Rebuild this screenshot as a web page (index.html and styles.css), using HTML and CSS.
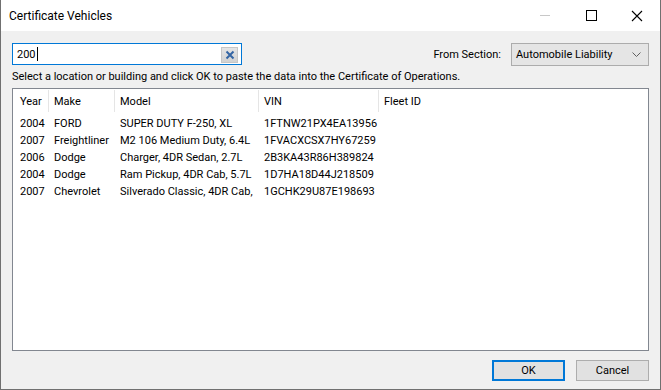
FILE: index.html
```html
<!DOCTYPE html>
<html lang="en">
<head>
    <meta charset="UTF-8">
    <title>Certificate Vehicles</title>
    <link rel="stylesheet" href="styles.css">
</head>
<body>
    <div class="window">
        <!-- Title bar -->
        <div class="titlebar">
            <span class="titlebar__text">Certificate Vehicles</span>
            <div class="titlebar__buttons">
                <span class="tb-btn tb-btn--min"><span class="tb-min"></span></span>
                <span class="tb-btn"><span class="tb-max"></span></span>
                <span class="tb-btn">
                    <svg width="12" height="12" viewBox="0 0 12 12"><path d="M1 1L11 11M11 1L1 11" stroke="#000" stroke-width="1.1" fill="none"/></svg>
                </span>
            </div>
        </div>

        <div class="content">
            <div class="toolbar">
                <div class="search">
                    <span class="search__value">200</span><span class="search__caret"></span>
                    <span class="search__clear">
                        <svg width="10" height="10" viewBox="0 0 10 10"><path d="M1.5 1.5L8.5 8.5M8.5 1.5L1.5 8.5" stroke="#3465a4" stroke-width="2" fill="none"/></svg>
                    </span>
                </div>
                <span class="toolbar__label">From Section:</span>
                <div class="select">
                    <span>Automobile Liability</span>
                    <svg width="9" height="5" viewBox="0 0 9 5"><path d="M0.5 0.5L4.5 4.5L8.5 0.5" stroke="#606060" stroke-width="1" fill="none"/></svg>
                </div>
            </div>

            <p class="hint">Select a location or building and click OK to paste the data into the Certificate of Operations.</p>

            <div class="list">
                <div class="list__row list__row--head">
                    <span class="col col--year">Year</span>
                    <span class="col col--make">Make</span>
                    <span class="col col--model">Model</span>
                    <span class="col col--vin">VIN</span>
                    <span class="col col--fleet">Fleet ID</span>
                </div>
                <div class="list__row">
                    <span class="col col--year">2004</span>
                    <span class="col col--make">FORD</span>
                    <span class="col col--model">SUPER DUTY F-250, XL</span>
                    <span class="col col--vin">1FTNW21PX4EA13956</span>
                    <span class="col col--fleet"></span>
                </div>
                <div class="list__row">
                    <span class="col col--year">2007</span>
                    <span class="col col--make">Freightliner</span>
                    <span class="col col--model">M2 106 Medium Duty, 6.4L</span>
                    <span class="col col--vin">1FVACXCSX7HY67259</span>
                    <span class="col col--fleet"></span>
                </div>
                <div class="list__row">
                    <span class="col col--year">2006</span>
                    <span class="col col--make">Dodge</span>
                    <span class="col col--model">Charger, 4DR Sedan, 2.7L</span>
                    <span class="col col--vin">2B3KA43R86H389824</span>
                    <span class="col col--fleet"></span>
                </div>
                <div class="list__row">
                    <span class="col col--year">2004</span>
                    <span class="col col--make">Dodge</span>
                    <span class="col col--model">Ram Pickup, 4DR Cab, 5.7L</span>
                    <span class="col col--vin">1D7HA18D44J218509</span>
                    <span class="col col--fleet"></span>
                </div>
                <div class="list__row">
                    <span class="col col--year">2007</span>
                    <span class="col col--make">Chevrolet</span>
                    <span class="col col--model">Silverado Classic, 4DR Cab,</span>
                    <span class="col col--vin">1GCHK29U87E198693</span>
                    <span class="col col--fleet"></span>
                </div>
            </div>

            <div class="actions">
                <button class="btn btn--default">OK</button>
                <button class="btn">Cancel</button>
            </div>
        </div>
    </div>
</body>
</html>
```

FILE: styles.css
```css
body {
    margin: 0;
    padding: 0;
    font-family: Roboto, "Noto Sans", sans-serif;
    font-size: 11px;
    color: #000;
}

.window {
    width: 661px;
    height: 390px;
    box-sizing: border-box;
    border: 1px solid #707070;
    border-top: none;
    background-color: #f0f0f0;
    display: flex;
    flex-direction: column;
}

/* Title bar */
.titlebar {
    height: 31px;
    background-color: #fff;
    display: flex;
    align-items: center;
    flex-shrink: 0;
    font-size: 12px;
}

.titlebar__text {
    padding-left: 8px;
    flex: 1;
}

.titlebar__buttons {
    display: flex;
    height: 100%;
}

.tb-btn {
    width: 46px;
    display: flex;
    align-items: center;
    justify-content: center;
}

.tb-min {
    width: 10px;
    height: 1px;
    background-color: #c8c8c8;
}

.tb-max {
    width: 9px;
    height: 9px;
    border: 1px solid #000;
}

/* Content */
.content {
    flex: 1;
    padding: 11px 11px 0 11px;
    display: flex;
    flex-direction: column;
}

.toolbar {
    display: flex;
    align-items: center;
    height: 24px;
}

.search {
    width: 230px;
    height: 22px;
    box-sizing: border-box;
    border: 1px solid #0078d7;
    background-color: #fff;
    display: flex;
    align-items: center;
    padding-left: 4px;
    position: relative;
}

.search__caret {
    width: 1px;
    height: 14px;
    background-color: #000;
    margin-left: 1px;
}

.search__clear {
    position: absolute;
    right: 3px;
    top: 3px;
    width: 15px;
    height: 14px;
    background: linear-gradient(#e4e4e4, #d2d2d2);
    border: 1px solid #c6c6c6;
    display: flex;
    align-items: center;
    justify-content: center;
}

.toolbar__label {
    margin-left: auto;
    margin-right: 10px;
}

.select {
    width: 138px;
    height: 23px;
    box-sizing: border-box;
    border: 1px solid #acacac;
    background-color: #e5e5e5;
    display: flex;
    align-items: center;
    justify-content: space-between;
    padding: 0 7px 0 4px;
}

.hint {
    margin: 1px 0 0 0;
    height: 20px;
    line-height: 20px;
}

/* List */
.list {
    margin-top: 1px;
    height: 263px;
    box-sizing: border-box;
    border: 1px solid #828790;
    background-color: #fff;
}

.list__row {
    display: flex;
    height: 17px;
    line-height: 18px;
}

.list__row--head {
    height: 22px;
    line-height: 24px;
    margin-top: 1px;
    margin-bottom: 3px;
}

.col {
    box-sizing: border-box;
    padding-left: 5px;
    white-space: nowrap;
    overflow: hidden;
}

.list__row--head .col {
    border-right: 1px solid #e5e5e5;
}

.list__row--head .col--fleet {
    border-right: none;
}

.col--year { width: 36px; padding-left: 7px; }
.col--make { width: 66px; }
.col--model { width: 144px; }
.col--vin { width: 120px; }
.col--fleet { flex: 1; }

/* Buttons */
.actions {
    display: flex;
    justify-content: flex-end;
    gap: 11px;
    margin-top: 9px;
}

.btn {
    width: 73px;
    height: 21px;
    box-sizing: border-box;
    border: 1px solid #adadad;
    background-color: #e1e1e1;
    font-family: inherit;
    font-size: 11px;
    padding: 0;
}

.btn--default {
    border: 2px solid #0078d7;
}
```
